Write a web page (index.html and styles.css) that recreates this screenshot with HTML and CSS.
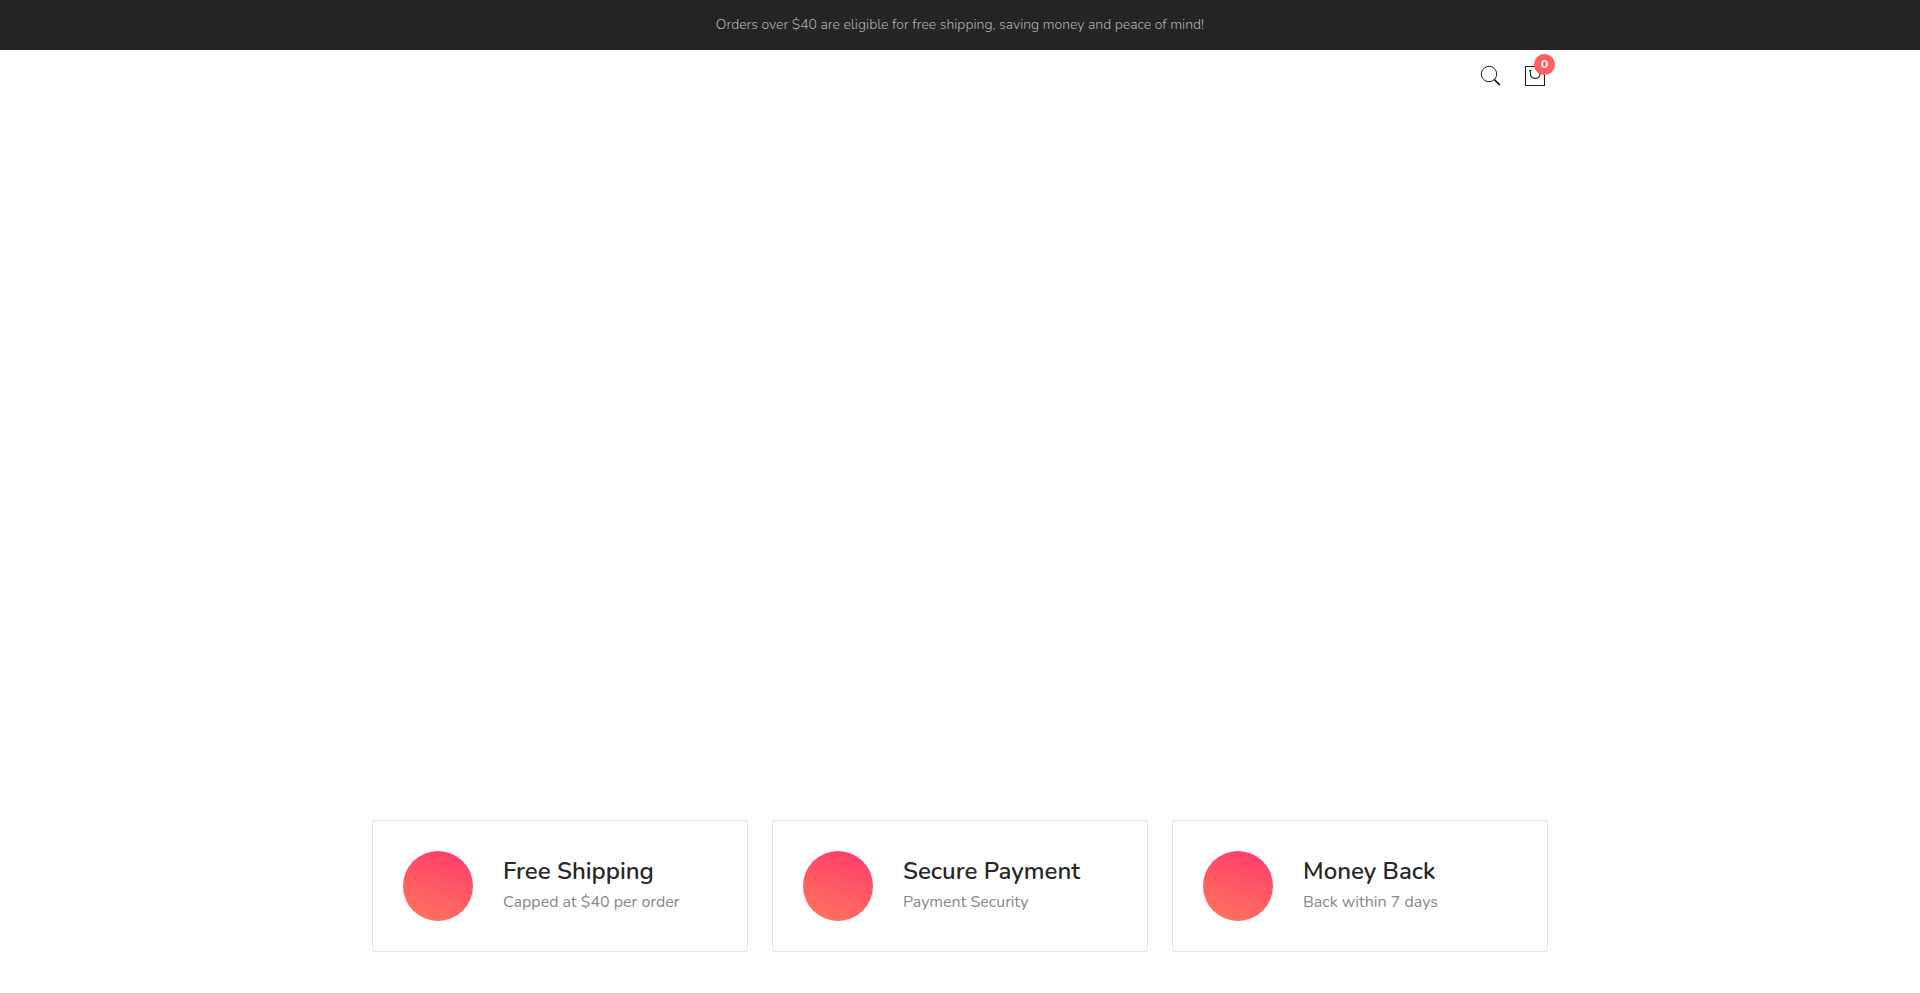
FILE: index.html
```html
<!DOCTYPE html>
<html lang="en">
<head>
    <meta charset="UTF-8">
    <meta name="viewport" content="width=device-width, initial-scale=1.0">
    <title>Shop</title>
    <link rel="stylesheet" href="styles.css">
</head>
<body>
    <div class="topbar">
        <p>Orders over $40 are eligible for free shipping, saving money and peace of mind!</p>
    </div>

    <header class="header">
        <div class="container header-actions">
            <button type="button" class="icon-btn" aria-label="Search">
                <svg width="22" height="22" viewBox="0 0 22 22" fill="none" stroke="#222">
                    <circle cx="9" cy="9" r="7.7"/>
                    <path d="M14.3 14.5L19.8 20" stroke="#000" stroke-width="1.7"/>
                </svg>
            </button>
            <a href="#" class="icon-btn" aria-label="Cart">
                <svg width="22" height="22" viewBox="0 0 22 22" fill="none" stroke="#222" stroke-width="1.1">
                    <path d="M1.5 1.5H20.5V20.5H1.5Z"/>
                    <path d="M5 5.5H7.4M14.8 5.5H17.2M6.4 5.5V8.8C6.4 11.6 8.4 13.4 11.2 13.4S16 11.6 16 8.8V5.5"/>
                </svg>
                <span class="badge">0</span>
            </a>
        </div>
    </header>

    <main>
        <section class="hero"></section>

        <section class="container features">
            <div class="feature">
                <div class="feature-icon"></div>
                <div class="feature-text">
                    <h3>Free Shipping</h3>
                    <p>Capped at $40 per order</p>
                </div>
            </div>
            <div class="feature">
                <div class="feature-icon"></div>
                <div class="feature-text">
                    <h3>Secure Payment</h3>
                    <p>Payment Security</p>
                </div>
            </div>
            <div class="feature">
                <div class="feature-icon"></div>
                <div class="feature-text">
                    <h3>Money Back</h3>
                    <p>Back within 7 days</p>
                </div>
            </div>
        </section>
    </main>
</body>
</html>
```
FILE: styles.css
```css
* {
    box-sizing: border-box;
}
body {
    margin: 0;
    font-family: Nunito, "Open Sans", sans-serif;
    font-size: 16px;
    color: #282828;
    background-color: #fff;
}
h3, p {
    margin: 0;
}
.container {
    max-width: 1200px;
    margin: 0 auto;
    padding: 0 12px;
}
.topbar {
    padding: 13px 12px;
    background-color: #242424;
    color: #b2b2b2;
    font-size: 14px;
    font-weight: 300;
    line-height: 24px;
    text-align: center;
}
.header-actions {
    display: flex;
    justify-content: flex-end;
    align-items: center;
    gap: 22px;
    padding: 15px 14px;
}
.icon-btn {
    position: relative;
    display: block;
    padding: 0;
    border: 0;
    background: none;
    color: #222;
    cursor: pointer;
}
.icon-btn svg {
    display: block;
}
.badge {
    position: absolute;
    top: -11px;
    right: -9px;
    width: 21px;
    height: 21px;
    border-radius: 50%;
    background-color: #ff5f5f;
    color: #fff;
    font-size: 12px;
    font-weight: 700;
    line-height: 21px;
    text-align: center;
}
.hero {
    min-height: 718px;
}
.features {
    display: grid;
    grid-template-columns: repeat(auto-fit, minmax(320px, 1fr));
    gap: 24px;
}
.feature {
    display: flex;
    align-items: center;
    gap: 30px;
    padding: 30px;
    border: 1px solid #e5e5e5;
    border-radius: 2px;
}
.feature-icon {
    flex: none;
    width: 70px;
    height: 70px;
    border-radius: 50%;
    background: linear-gradient(20deg, #ff765c, #ff5f62 40%, #ff3f6c 90%);
}
.feature-text h3 {
    font-size: 24px;
    font-weight: 600;
    line-height: 32px;
}
.feature-text p {
    color: #888;
    font-size: 16px;
    line-height: 30px;
}
```
